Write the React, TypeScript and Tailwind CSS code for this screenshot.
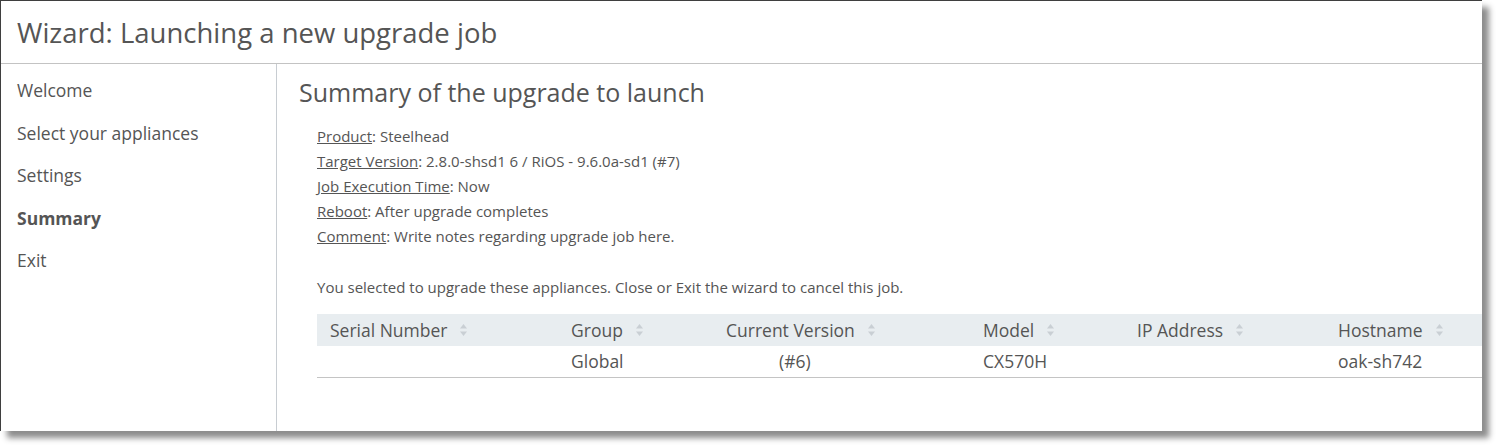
import React from "react";

function SortIcon() {
  return (
    <svg width="7" height="14" viewBox="0 0 7 14" className="ml-[13px] shrink-0">
      <polygon points="3.5,1 7,5.5 0,5.5" fill="#c9cfd4" />
      <polygon points="0,8.5 7,8.5 3.5,13" fill="#c9cfd4" />
    </svg>
  );
}

const cols = ["Serial Number", "Group", "Current Version", "Model", "IP Address", "Hostname"];

export default function App() {
  return (
    <div
      className="w-[1498px] h-[447px] bg-white text-[#555]"
      style={{ fontFamily: '"Open Sans", "Noto Sans", sans-serif' }}
    >
      <div className="w-[1482px] h-[431px] border-t border-l border-[#3f3f3f] bg-white shadow-[7px_7px_6px_rgba(0,0,0,0.45)] flex flex-col overflow-hidden">
        <div className="h-[63px] shrink-0 border-b border-[#c3c3c3] pl-[16px] pt-[14px]">
          <div className="text-[27.5px] leading-[36px]">Wizard: Launching a new upgrade job</div>
        </div>
        <div className="flex flex-1 min-h-0">
          <div className="w-[276px] shrink-0 border-r border-[#c8cdd2] pl-[16px] pt-[5px] text-[17.5px] leading-[42.5px]">
            <div>Welcome</div>
            <div>Select your appliances</div>
            <div>Settings</div>
            <div className="font-bold">Summary</div>
            <div>Exit</div>
          </div>
          <div className="flex-1 min-w-0 pl-[22px] pt-[11px] overflow-hidden">
            <div className="text-[25px] leading-[34px]">Summary of the upgrade to launch</div>
            <div className="ml-[18px] mt-[15px] text-[15px] leading-[25px]">
              <div><span className="underline">Product</span>: Steelhead</div>
              <div><span className="underline">Target Version</span>: 2.8.0-shsd1 6 / RiOS - 9.6.0a-sd1 (#7)</div>
              <div><span className="underline">Job Execution Time</span>: Now</div>
              <div><span className="underline">Reboot</span>: After upgrade completes</div>
              <div><span className="underline">Comment</span>: Write notes regarding upgrade job here.</div>
              <div className="mt-[26px]">You selected to upgrade these appliances. Close or Exit the wizard to cancel this job.</div>
            </div>
            <div className="ml-[18px] mt-[14px] w-[1180px] text-[17.5px]">
              <div className="grid grid-cols-[241px_155px_257px_154px_201px_1fr] h-[32px] bg-[#e8edf0]">
                {cols.map((c) => (
                  <div key={c} className="flex items-center pl-[13px] whitespace-nowrap">
                    <span>{c}</span>
                    <SortIcon />
                  </div>
                ))}
              </div>
              <div className="grid grid-cols-[241px_155px_257px_154px_201px_1fr] h-[32px] border-b border-[#c4c4c4]">
                <div className="flex items-center pl-[13px]"></div>
                <div className="flex items-center pl-[13px]">Global</div>
                <div className="flex items-center pl-[66px]">(#6)</div>
                <div className="flex items-center pl-[13px]">CX570H</div>
                <div className="flex items-center pl-[13px]"></div>
                <div className="flex items-center pl-[13px]">oak-sh742</div>
              </div>
            </div>
          </div>
        </div>
      </div>
    </div>
  );
}
